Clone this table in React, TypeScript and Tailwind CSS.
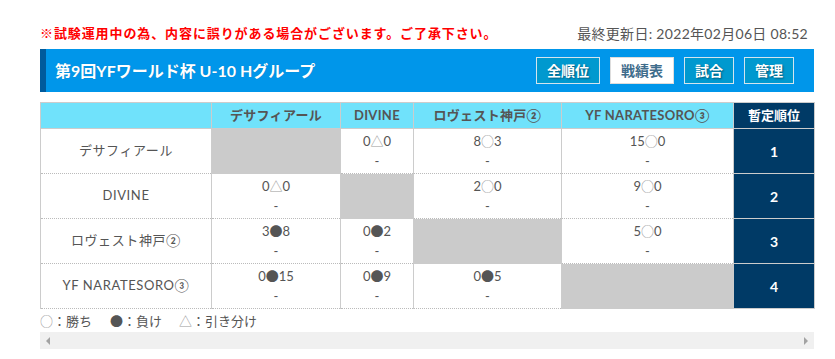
import React from "react";

const teams = ["デサフィアール", "DIVINE", "ロヴェスト神戸②", "YF NARATESORO③"];
type Cell = null | [string, string, string];
const results: Cell[][] = [
  [null, ["0", "△", "0"], ["8", "○", "3"], ["15", "○", "0"]],
  [["0", "△", "0"], null, ["2", "○", "0"], ["9", "○", "0"]],
  [["3", "●", "8"], ["0", "●", "2"], null, ["5", "○", "0"]],
  [["0", "●", "15"], ["0", "●", "9"], ["0", "●", "5"], null],
];
const widths = ["w-[171px]", "w-[129px]", "w-[73px]", "w-[148px]", "w-[172px]", "w-[81px]"];
const cjk = { fontFamily: '"Noto Sans CJK JP", sans-serif' };

function Sym({ s }: { s: string }) {
  return (
    <span style={cjk} className={s === "●" ? "text-[#555]" : "text-[#999]"}>
      {s}
    </span>
  );
}

export default function App() {
  return (
    <div
      className="w-[835px] h-[359px] bg-white text-[#555] overflow-hidden"
      style={{ fontFamily: 'Lato, "Noto Sans CJK JP", sans-serif' }}
    >
      <div className="ml-[40px] w-[774px] pt-[25px]">
        <div className="flex items-center justify-between h-[17px]">
          <span className="text-[#ff0000] font-bold text-[13px] tracking-[0.9px]">
            ※試験運用中の為、内容に誤りがある場合がございます。ご了承下さい。
          </span>
          <span className="pr-[6px] text-[#555] text-[14px] tracking-[0.3px]">最終更新日: 2022年02月06日 08:52</span>
        </div>
        <div className="mt-[7px] h-[43px] flex items-center bg-[#0096ea] border-l-[6px] border-[#005a9c]">
          <div className="flex-1 pl-[9px] text-white font-bold text-[16px]" style={{ textShadow: "0 0 1px rgba(0,0,0,0.2)" }}>
            第9回YFワールド杯 U-10 Hグループ
          </div>
          <div className="flex gap-[10px] pr-[20px]">
            {["全順位", "戦績表", "試合", "管理"].map((b) => (
              <div
                key={b}
                className={
                  "h-[27px] px-[10px] flex items-center justify-center border text-[14px] font-bold " +
                  (b === "戦績表"
                    ? "bg-white border-[#ddd] text-[#3f6d8c]"
                    : "bg-[#0099cf] border-[#d4e4ee] text-white")
                }
                style={b === "戦績表" ? cjk : { ...cjk, textShadow: "1px 1px 2px rgba(0,0,0,0.45)" }}
              >
                {b}
              </div>
            ))}
          </div>
        </div>
        <table className="mt-[10px] w-[774px] border-collapse table-fixed text-[13px]">
          <colgroup>
            {widths.map((w, i) => (
              <col key={i} className={w} />
            ))}
          </colgroup>
          <thead>
            <tr className="h-[26px]">
              <th className="bg-[#70e2fb] border border-[#ccc]"></th>
              {teams.map((t) => (
                <th key={t} className="bg-[#70e2fb] border border-[#ccc] font-bold text-[#555] text-center tracking-[0.3px]">
                  {t}
                </th>
              ))}
              <th className="bg-[#003a66] border border-[#ccc] font-bold text-white text-center">暫定順位</th>
            </tr>
          </thead>
          <tbody>
            {teams.map((t, r) => (
              <tr key={t} className="h-[45px]">
                <td
                  className="border-x border-x-[#ccc] border-b border-b-[#bbb] text-center tracking-[0.6px]"
                  style={{ borderBottomStyle: "dotted", borderLeftStyle: "solid", borderRightStyle: "solid" }}
                >
                  {t}
                </td>
                {results[r].map((c, i) =>
                  c === null ? (
                    <td key={i} className="bg-[#cbcbcb] border-x border-[#ccc]" />
                  ) : (
                    <td
                      key={i}
                      className="border-x border-x-[#ccc] border-b border-b-[#bbb] text-center align-middle leading-[20px]"
                      style={{ borderBottomStyle: "dotted", borderLeftStyle: "solid", borderRightStyle: "solid" }}
                    >
                      <div>
                        {c[0]}
                        <Sym s={c[1]} />
                        {c[2]}
                      </div>
                      <div>-</div>
                    </td>
                  )
                )}
                <td className="bg-[#003a66] border border-[#ccc] text-white font-bold text-[14px] text-center">{r + 1}</td>
              </tr>
            ))}
          </tbody>
        </table>
        <div className="h-[23px] flex items-center text-[13px] text-[#555]" style={cjk}>
          <span>
            <span className="text-[#999]">○</span>：勝ち
          </span>
          <span className="ml-[18px]">●：負け</span>
          <span className="ml-[17px]">
            <span className="text-[#999]">△</span>：引き分け
          </span>
        </div>
        <div className="h-[17px] bg-[#f0f0f0] flex items-center justify-between px-[6px]">
          <div className="w-0 h-0 border-y-[4px] border-y-transparent border-r-[4px] border-r-[#a3a3a3]" />
          <div className="w-0 h-0 border-y-[4px] border-y-transparent border-l-[4px] border-l-[#a3a3a3]" />
        </div>
      </div>
    </div>
  );
}
